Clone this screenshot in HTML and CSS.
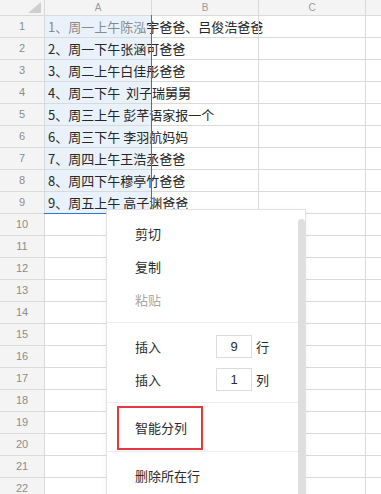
FILE: index.html
```html
<!DOCTYPE html>
<html>
<head>
<meta charset="utf-8">
<link rel="stylesheet" href="styles.css">
</head>
<body>
<div class="sheet">
  <div class="grid">
    <div class="hd corner"><svg width="14" height="11" viewBox="0 0 14 11"><polygon points="0,11 13,11 13,0" fill="#cfcfcf"/></svg></div>
    <div class="hd col">A</div><div class="hd col">B</div><div class="hd col">C</div><div class="hd col"></div>

    <div class="rn">1</div><div class="c sel"><span class="dim">1、周一上午陈泓</span>宇爸爸、吕俊浩爸爸</div><div class="c"></div><div class="c"></div><div class="c"></div>
    <div class="rn">2</div><div class="c sel">2、周一下午张涵可爸爸</div><div class="c"></div><div class="c"></div><div class="c"></div>
    <div class="rn">3</div><div class="c sel">3、周二上午白佳彤爸爸</div><div class="c"></div><div class="c"></div><div class="c"></div>
    <div class="rn">4</div><div class="c sel">4、周二下午&nbsp;&nbsp;刘子瑞舅舅</div><div class="c"></div><div class="c"></div><div class="c"></div>
    <div class="rn">5</div><div class="c sel">5、周三上午 彭芊语家报一个</div><div class="c"></div><div class="c"></div><div class="c"></div>
    <div class="rn">6</div><div class="c sel">6、周三下午 李羽航妈妈</div><div class="c"></div><div class="c"></div><div class="c"></div>
    <div class="rn">7</div><div class="c sel">7、周四上午王浩丞爸爸</div><div class="c"></div><div class="c"></div><div class="c"></div>
    <div class="rn">8</div><div class="c sel">8、周四下午穆亭竹爸爸</div><div class="c"></div><div class="c"></div><div class="c"></div>
    <div class="rn">9</div><div class="c sel">9、周五上午 高子渊爸爸</div><div class="c"></div><div class="c"></div><div class="c"></div>
    <div class="rn">10</div><div class="c"></div><div class="c"></div><div class="c"></div><div class="c"></div>
    <div class="rn">11</div><div class="c"></div><div class="c"></div><div class="c"></div><div class="c"></div>
    <div class="rn">12</div><div class="c"></div><div class="c"></div><div class="c"></div><div class="c"></div>
    <div class="rn">13</div><div class="c"></div><div class="c"></div><div class="c"></div><div class="c"></div>
    <div class="rn">14</div><div class="c"></div><div class="c"></div><div class="c"></div><div class="c"></div>
    <div class="rn">15</div><div class="c"></div><div class="c"></div><div class="c"></div><div class="c"></div>
    <div class="rn">16</div><div class="c"></div><div class="c"></div><div class="c"></div><div class="c"></div>
    <div class="rn">17</div><div class="c"></div><div class="c"></div><div class="c"></div><div class="c"></div>
    <div class="rn">18</div><div class="c"></div><div class="c"></div><div class="c"></div><div class="c"></div>
    <div class="rn">19</div><div class="c"></div><div class="c"></div><div class="c"></div><div class="c"></div>
    <div class="rn">20</div><div class="c"></div><div class="c"></div><div class="c"></div><div class="c"></div>
    <div class="rn">21</div><div class="c"></div><div class="c"></div><div class="c"></div><div class="c"></div>
    <div class="rn">22</div><div class="c"></div><div class="c"></div><div class="c"></div><div class="c"></div>
  </div>
  <div class="selection"></div>

  <div class="menu">
    <div class="menu-list">
      <div class="item">剪切</div>
      <div class="item">复制</div>
      <div class="item disabled">粘贴</div>
      <div class="sep"></div>
      <div class="item insert"><span class="lbl">插入</span><span class="num">9</span><span class="unit">行</span></div>
      <div class="item insert"><span class="lbl">插入</span><span class="num">1</span><span class="unit">列</span></div>
      <div class="sep sep2"></div>
      <div class="hl-wrap"><div class="hl">智能分列</div></div>
      <div class="sep sep3"></div>
      <div class="item last">删除所在行</div>
    </div>
    <div class="scroll"><div class="thumb"></div></div>
  </div>
</div>
</body>
</html>
```
FILE: styles.css
```css
html, body {
  margin: 0;
  padding: 0;
  background: #fff;
}
body {
  width: 381px;
  height: 494px;
  overflow: hidden;
  font-family: "Noto Sans CJK SC", "Noto Sans", sans-serif;
}
.sheet {
  position: relative;
  width: 381px;
  height: 494px;
  overflow: hidden;
}
.grid {
  display: grid;
  grid-template-columns: 45px 107px 107px 107px 60px;
  grid-template-rows: 16px;
  grid-auto-rows: 22px;
}
.grid > div {
  box-sizing: border-box;
  border-right: 1px solid #dadada;
  border-bottom: 1px solid #dadada;
}
.hd {
  background: #f4f4f4;
  color: #9a9a9a;
  font-family: "Liberation Sans", sans-serif;
  font-size: 10px;
  line-height: 15px;
  text-align: center;
}
.corner {
  display: flex;
  justify-content: flex-end;
  align-items: flex-start;
  padding: 2px 2px 0 0;
}
.corner svg { display: block; }
.rn {
  background: #f4f4f4;
  color: #8c8c8c;
  font-family: "Liberation Sans", sans-serif;
  font-size: 11px;
  line-height: 21px;
  text-align: center;
}
.c {
  font-size: 13px;
  line-height: 21px;
  color: #262626;
  padding-left: 3px;
  white-space: nowrap;
  overflow: visible;
}
.c.sel {
  background: #e9f2fb;
}
.dim { color: #8a8a8a; }
.selection {
  position: absolute;
  left: 44px;
  top: 15px;
  width: 107px;
  height: 198px;
  border-right: 1px solid #2a78d2;
  border-bottom: 1px solid #2a78d2;
  pointer-events: none;
}
.menu {
  position: absolute;
  left: 106px;
  top: 209px;
  width: 200px;
  height: 300px;
  box-sizing: border-box;
  background: #fff;
  border: 1px solid #e2e2e2;
  box-shadow: 0 2px 6px rgba(0,0,0,0.06);
  display: flex;
  font-size: 13px;
  color: #2b2b2b;
}
.menu-list {
  flex: 1;
  padding-top: 7px;
}
.item {
  height: 33px;
  line-height: 33px;
  padding-left: 28px;
}
.item.disabled { color: #a8a8a8; }
.sep {
  height: 1px;
  background: #ededed;
  margin: 6px 0 7px;
}
.sep2 { margin: 6px 0 3px; }
.sep3 { margin: 1px 0 7px; }
.insert {
  display: flex;
  align-items: center;
}
.lbl { width: 81px; }
.num {
  box-sizing: border-box;
  width: 36px;
  height: 23px;
  border: 1px solid #dcdcdc;
  text-align: center;
  line-height: 21px;
  font-family: "Liberation Sans", sans-serif;
  font-size: 13px;
}
.unit { margin-left: 4px; }
.hl-wrap {
  padding-left: 10px;
}
.hl {
  display: inline-block;
  box-sizing: border-box;
  height: 44px;
  line-height: 40px;
  padding: 0 14px 0 16px;
  border: 2px solid #e23a3f;
}
.scroll {
  width: 7px;
  padding-top: 9px;
}
.thumb {
  height: 100%;
  background: #dedede;
  border-radius: 4px 4px 0 0;
}
```
